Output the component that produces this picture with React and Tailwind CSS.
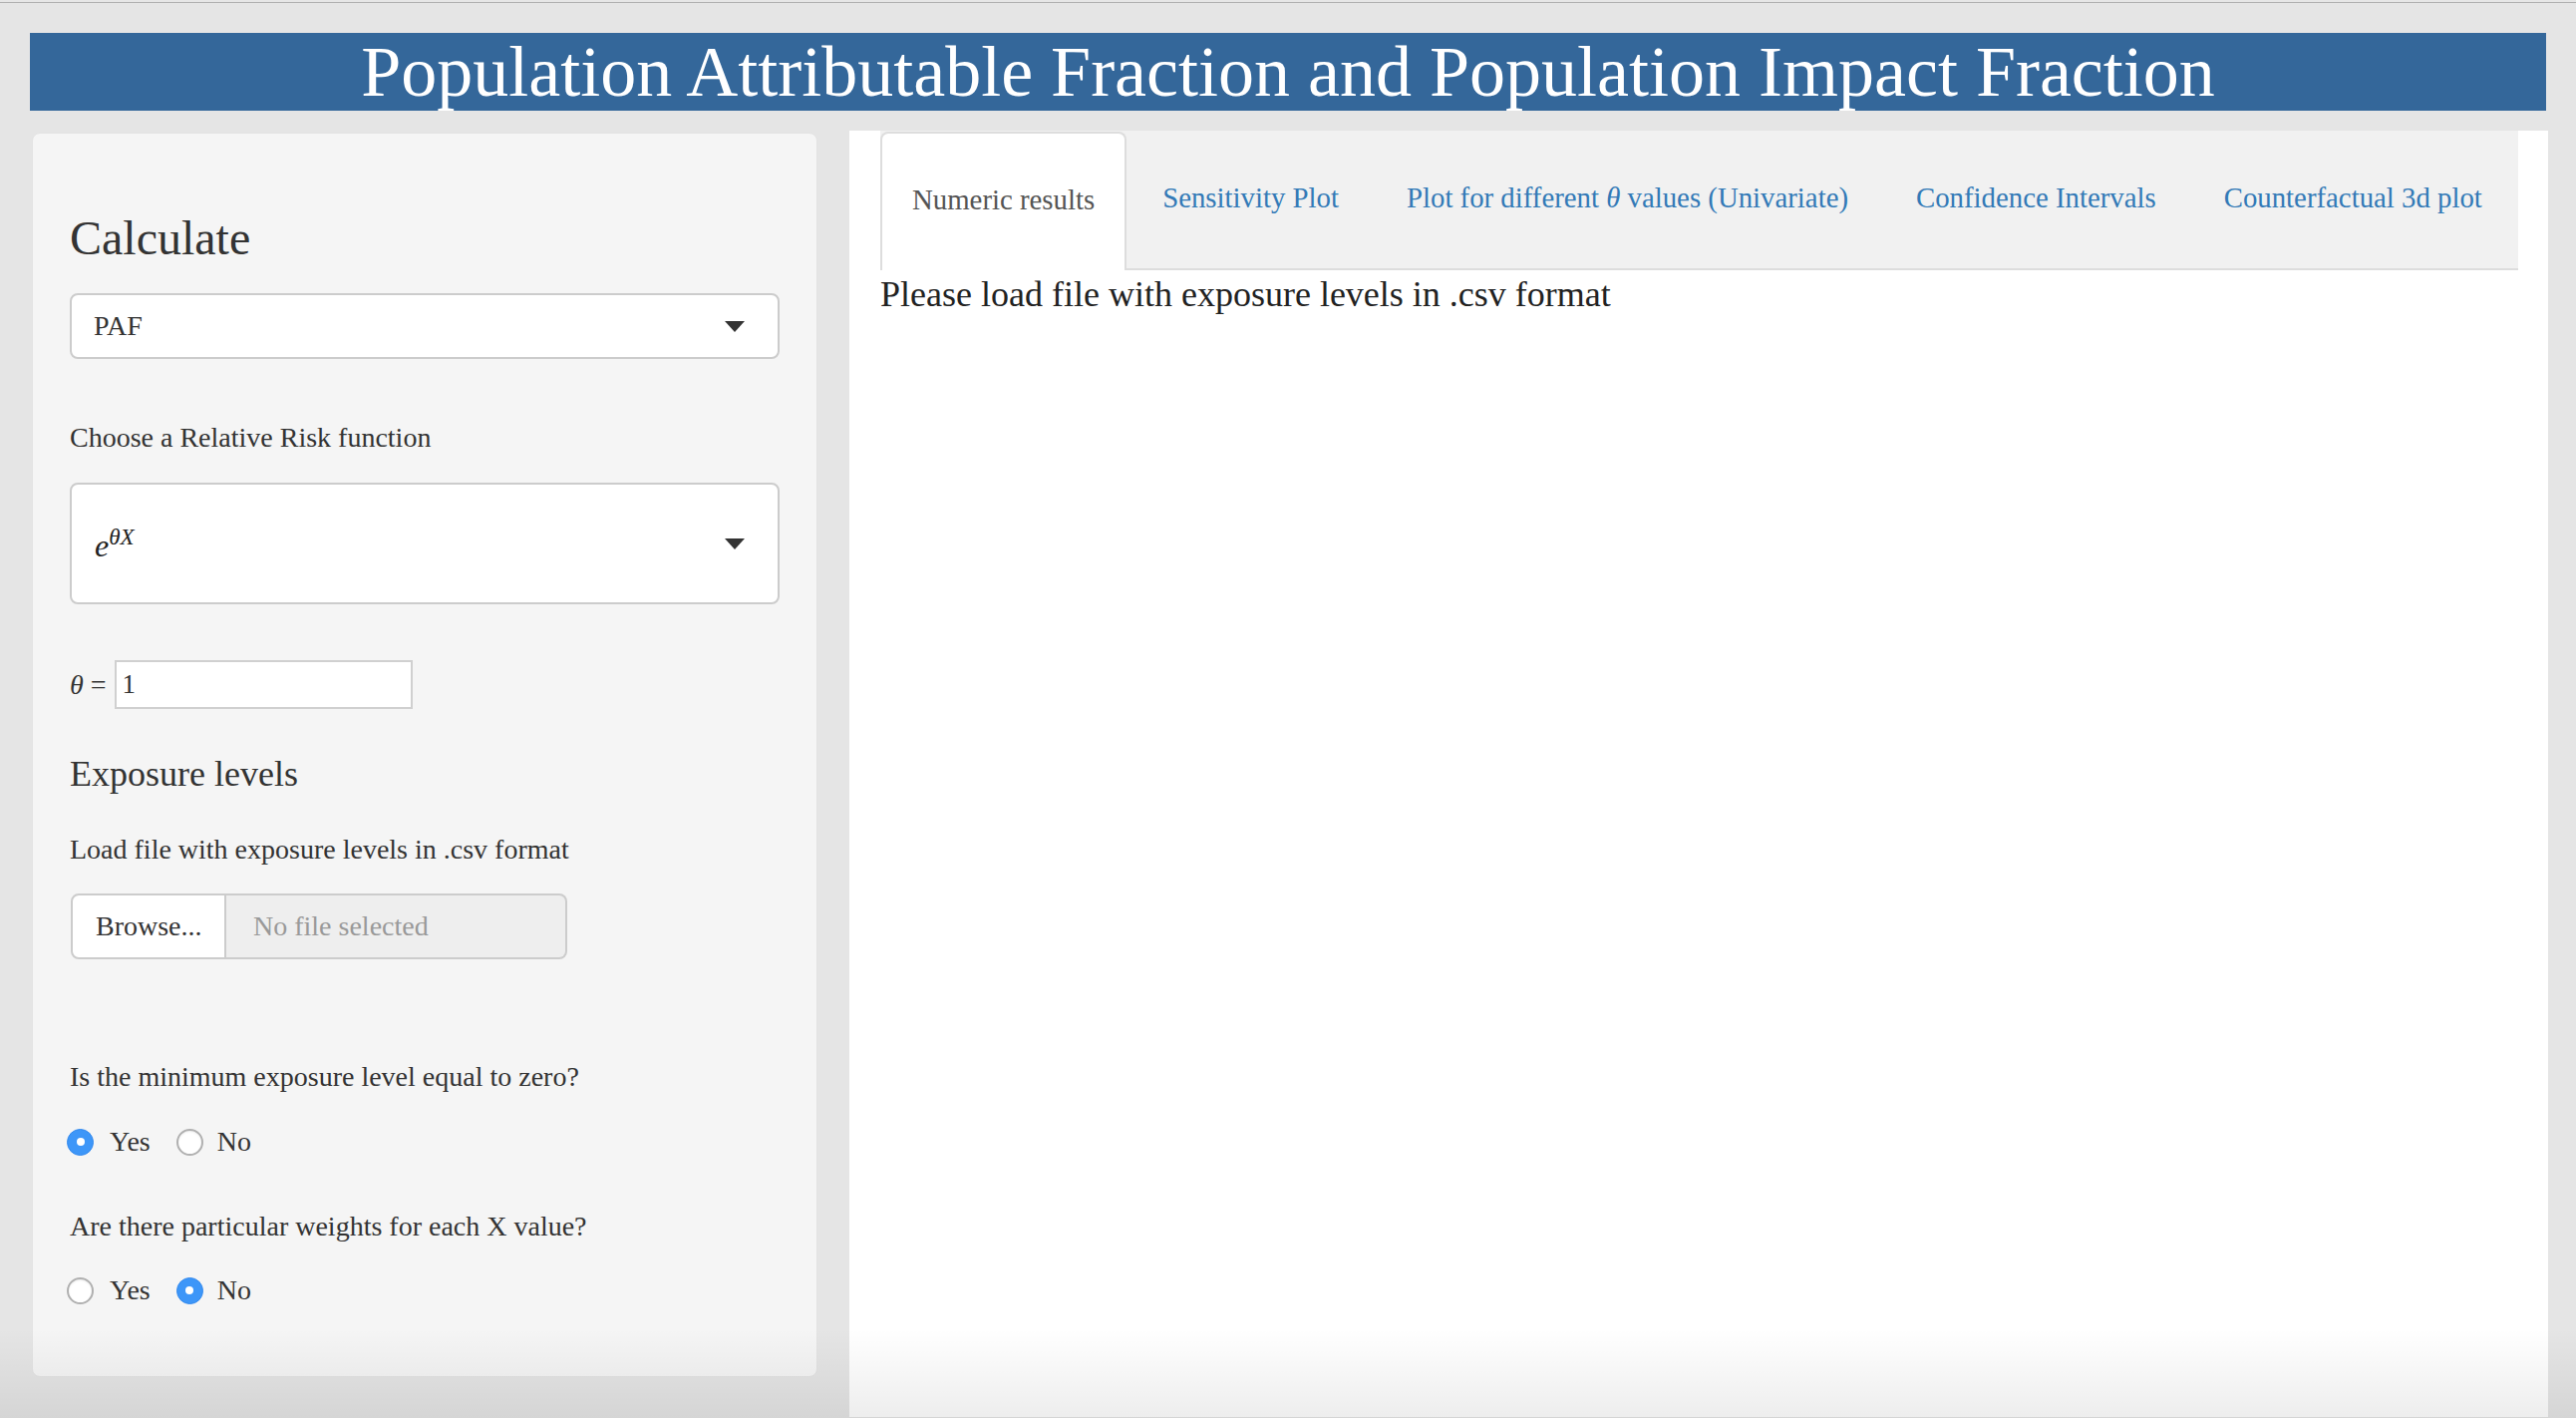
import React from 'react';

const serif = "font-['Liberation_Serif','Times_New_Roman',serif]";

const Caret = () => (
  <svg width="20" height="11" viewBox="0 0 20 11" className="shrink-0">
    <path d="M0 0 L20 0 L10 11 Z" fill="#333" />
  </svg>
);

const Radio = ({ checked }) =>
  checked ? (
    <span className="w-[27px] h-[27px] rounded-full bg-[#3d96f8] border border-[#3289ee] flex items-center justify-center shrink-0">
      <span className="w-[8px] h-[8px] rounded-full bg-white" />
    </span>
  ) : (
    <span className="w-[27px] h-[27px] rounded-full bg-white border-2 border-[#b0b0b0] shadow-[inset_0_1px_2px_rgba(0,0,0,0.08)] shrink-0" />
  );

const RadioRow = ({ value }) => (
  <div className="flex items-center h-[40px] -ml-[3px] text-[28px] text-[#333]">
    <Radio checked={value === 'yes'} />
    <span className="ml-[16px] leading-none">Yes</span>
    <span className="ml-[26px] flex items-center">
      <Radio checked={value === 'no'} />
      <span className="ml-[14px] leading-none">No</span>
    </span>
  </div>
);

const tabs = ['Sensitivity Plot', 'theta', 'Confidence Intervals', 'Counterfactual 3d plot'];

export default function App() {
  return (
    <div className={`${serif} h-[1422px] overflow-hidden bg-[#e5e5e5] text-[#333] relative`}>
      {/* window edge */}
      <div className="h-[3px] bg-[#e6e6e6] border-b border-[#b0b0b0]" />

      <div className="px-[30px]">
        {/* Title */}
        <div className="mt-[30px] h-[78px] bg-[#34679a] text-white text-center text-[72px] leading-[78px]">
          Population Attributable Fraction and Population Impact Fraction
        </div>

        <div className="flex mt-[20px]">
          {/* Sidebar */}
          <div className="w-[822px] shrink-0">
            <div className="ml-[2px] mt-[2px] w-[788px] h-[1248px] bg-[#f5f5f5] border border-[#e3e3e3] rounded-[8px] px-[37px] pt-[38px]">
              <h3 className="mt-[40px] text-[48px] leading-[53px]">Calculate</h3>

              <div className="mt-[29px] h-[66px] bg-white border-2 border-[#cccccc] rounded-[8px] flex items-center justify-between pl-[22px] pr-[33px]">
                <span className="text-[28px] leading-none text-[#333]">PAF</span>
                <Caret />
              </div>

              <p className="mt-[59px] text-[28px] leading-[40px]">Choose a Relative Risk function</p>

              <div className="mt-[25px] h-[122px] bg-white border-2 border-[#cccccc] rounded-[8px] flex items-center justify-between pl-[23px] pr-[33px]">
                <span className="italic text-[32px] leading-none pt-[4px] text-[#222]">
                  e<span className="relative -top-[12px] text-[23px]">θX</span>
                </span>
                <Caret />
              </div>

              <div className="mt-[56px] flex items-center h-[49px]">
                <span className="text-[28px] leading-none">
                  <span className="italic">θ</span> =
                </span>
                <div className="ml-[8px] w-[299px] h-[49px] bg-white border-2 border-[#d0d0d0] flex items-center pl-[6px] text-[27px]">
                  1
                </div>
              </div>

              <h4 className="mt-[45px] text-[36px] leading-[40px]">Exposure levels</h4>

              <p className="mt-[36px] text-[28px] leading-[40px]">Load file with exposure levels in .csv format</p>

              <div className="mt-[24px] flex h-[66px] w-[498px] ml-[1px]">
                <div className="w-[156px] bg-white border-2 border-[#cccccc] rounded-l-[8px] flex items-center pl-[23px] text-[28px]">
                  Browse...
                </div>
                <div className="flex-1 bg-[#eeeeee] border-2 border-l-0 border-[#cccccc] rounded-r-[8px] flex items-center pl-[27px] text-[28px] text-[#999]">
                  No file selected
                </div>
              </div>

              <p className="mt-[98px] text-[28px] leading-[40px]">Is the minimum exposure level equal to zero?</p>
              <div className="mt-[25px]">
                <RadioRow value="yes" />
              </div>

              <p className="mt-[45px] text-[28px] leading-[40px]">Are there particular weights for each X value?</p>
              <div className="mt-[24px]">
                <RadioRow value="no" />
              </div>
            </div>
          </div>

          {/* Main panel */}
          <div className="flex-1 -mr-[2px] h-[1290px] bg-white pl-[31px] pr-[30px]">
            <div className="h-[140px] bg-[#f1f1f1] border-b-2 border-[#dddddd] flex items-stretch">
              <div className="mt-[1px] -mb-[2px] mr-[4px] bg-white border-2 border-b-0 border-[#dddddd] rounded-t-[8px] px-[30px] flex items-center pb-[4px] text-[28.8px] text-[#555]">
                Numeric results
              </div>
              {tabs.map((t) => (
                <div
                  key={t}
                  className="mt-[1px] mr-[4px] border-2 border-transparent px-[30px] flex items-center pb-[4px] text-[28.8px] text-[#337ab7] whitespace-nowrap"
                >
                  {t === 'theta' ? (
                    <span>
                      Plot for different <span className="italic">θ</span> values (Univariate)
                    </span>
                  ) : (
                    t
                  )}
                </div>
              ))}
            </div>
            <div className="mt-[4px] text-[36px] leading-[40px] text-[#222]">
              Please load file with exposure levels in .csv format
            </div>
          </div>
        </div>
      </div>

      {/* bottom window shading */}
      <div className="pointer-events-none absolute left-0 right-0 bottom-0 h-[90px] bg-gradient-to-b from-transparent to-black/[0.07]" />
    </div>
  );
}
